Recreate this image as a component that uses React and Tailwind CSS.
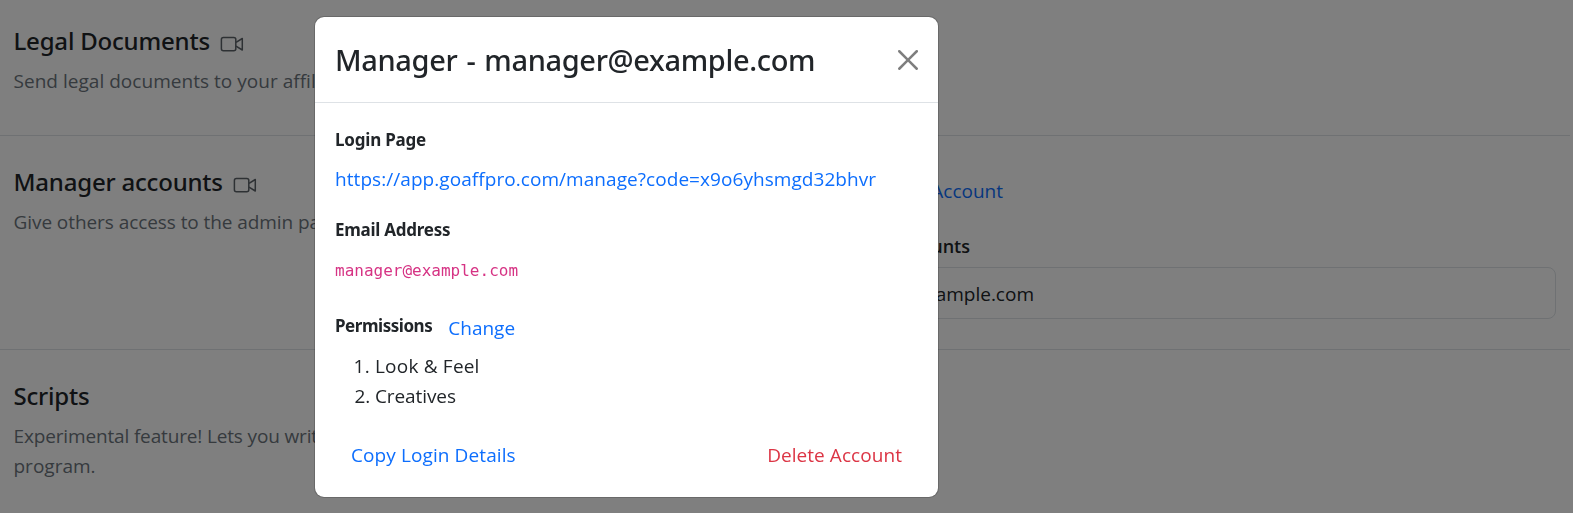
import React from "react";

function VideoIcon() {
  return (
    <svg viewBox="0 0 24 16" className="mt-[10px] h-4 w-6 shrink-0" fill="none" stroke="#5c6369" strokeWidth="1.5" strokeLinejoin="round">
      <rect x="1.4" y="1.5" width="14.4" height="13.2" rx="2" />
      <path d="M16 6.4 L22.3 2.5 V14 L16 10.2" />
    </svg>
  );
}

function Section({ title, icon, first, children, aside, className }) {
  return (
    <section className={`mr-[3px] flex ${className}`}>
      <div className={`w-[785px] shrink-0 pl-[13.5px] ${first ? "pt-[26px]" : "pt-[31px]"}`}>
        <div className="flex gap-[10px]">
          <h5 className="font-['Noto_Sans',sans-serif] text-[24px] leading-[30px] font-medium tracking-[-0.2px] text-[#212529]">{title}</h5>
          {icon && <VideoIcon />}
        </div>
        <p className="mt-[10px] text-[#6c757d]">{children}</p>
      </div>
      {aside}
    </section>
  );
}

const label = "font-['Noto_Sans',sans-serif] text-[17px] leading-6 font-bold";

export default function App() {
  return (
    <div className="h-[513px] overflow-hidden bg-white font-['Open_Sans',sans-serif] text-[19px] leading-[30px] text-[#212529]">
      <Section first icon title="Legal Documents" className="h-[136px] border-b border-[#dee2e6]">
        <span className="tracking-[0.03px]">Send legal documents to your affiliates</span>
      </Section>
      <Section
        icon
        title="Manager accounts"
        className="h-[214px] border-b border-[#dee2e6]"
        aside={
          <div className="mr-[14px] flex-1 pt-10">
            <div className="w-[218px] text-right text-[#0d6efd]">Add Account</div>
            <div className="mt-7 w-[185px] text-right text-[18px] leading-6 font-semibold">Accounts</div>
            <div className="mt-[9px] h-[52px] rounded-lg border border-[#dee2e6] pt-[11px]">
              <div className="w-[248px] text-right">manager@example.com</div>
            </div>
          </div>
        }
      >
        <span className="tracking-[-0.07px]">Give others access to the admin panel</span>
      </Section>
      <Section title="Scripts" className="h-[163px]">
        <span className="tracking-[-0.15px]">Experimental feature! Lets you write</span>
        <br />
        program.
      </Section>

      <div className="fixed inset-0 flex items-start bg-black/50 pt-4 pl-[314px]">
        <div className="h-[482px] w-[625px] rounded-[10px] border border-black/[.175] bg-white bg-clip-padding">
          <div className="flex items-start justify-between border-b border-[#dee2e6] p-5">
            <h4 className="font-['Noto_Sans',sans-serif] text-[29px] leading-[45px] font-medium tracking-[-0.34px]">
              Manager <span className="mx-[1.7px]">-</span> manager@example.com
            </h4>
            <button aria-label="Close" className="mt-[13px] opacity-50">
              <svg viewBox="0 0 16 16" className="size-5" fill="#000">
                <path d="M.293.293a1 1 0 0 1 1.414 0L8 6.586 14.293.293a1 1 0 1 1 1.414 1.414L9.414 8l6.293 6.293a1 1 0 0 1-1.414 1.414L8 9.414l-6.293 6.293a1 1 0 0 1-1.414-1.414L6.586 8 .293 1.707a1 1 0 0 1 0-1.414z" />
              </svg>
            </button>
          </div>
          <div className="px-5 pt-[25px]">
            <div className={`${label} tracking-[-0.2px]`}>Login Page</div>
            <div className="mt-3 tracking-[0.06px] text-[#0d6efd]">https://app.goaffpro.com/manage?code=x9o6yhsmgd32bhvr</div>
            <div className={`mt-6 ${label} tracking-[-0.25px]`}>Email Address</div>
            <div className="mt-[14px] font-['DejaVu_Sans_Mono',monospace] text-[16px] leading-[30px] text-[#d63384]">manager@example.com</div>
            <div className="mt-[27px] flex gap-4">
              <div className={`pt-px ${label} tracking-[-0.46px]`}>Permissions</div>
              <div className="text-[#0d6efd]">Change</div>
            </div>
            <ol className="mt-[8px] list-decimal pl-10">
              <li className="tracking-[0.2px]">Look &amp; Feel</li>
              <li className="tracking-[-0.1px]">Creatives</li>
            </ol>
            <div className="mt-[29px] flex justify-between px-4">
              <button className="tracking-[0.1px] text-[#0d6efd]">Copy Login Details</button>
              <button className="tracking-[0.06px] text-[#dc3545]">Delete Account</button>
            </div>
          </div>
        </div>
      </div>
    </div>
  );
}
